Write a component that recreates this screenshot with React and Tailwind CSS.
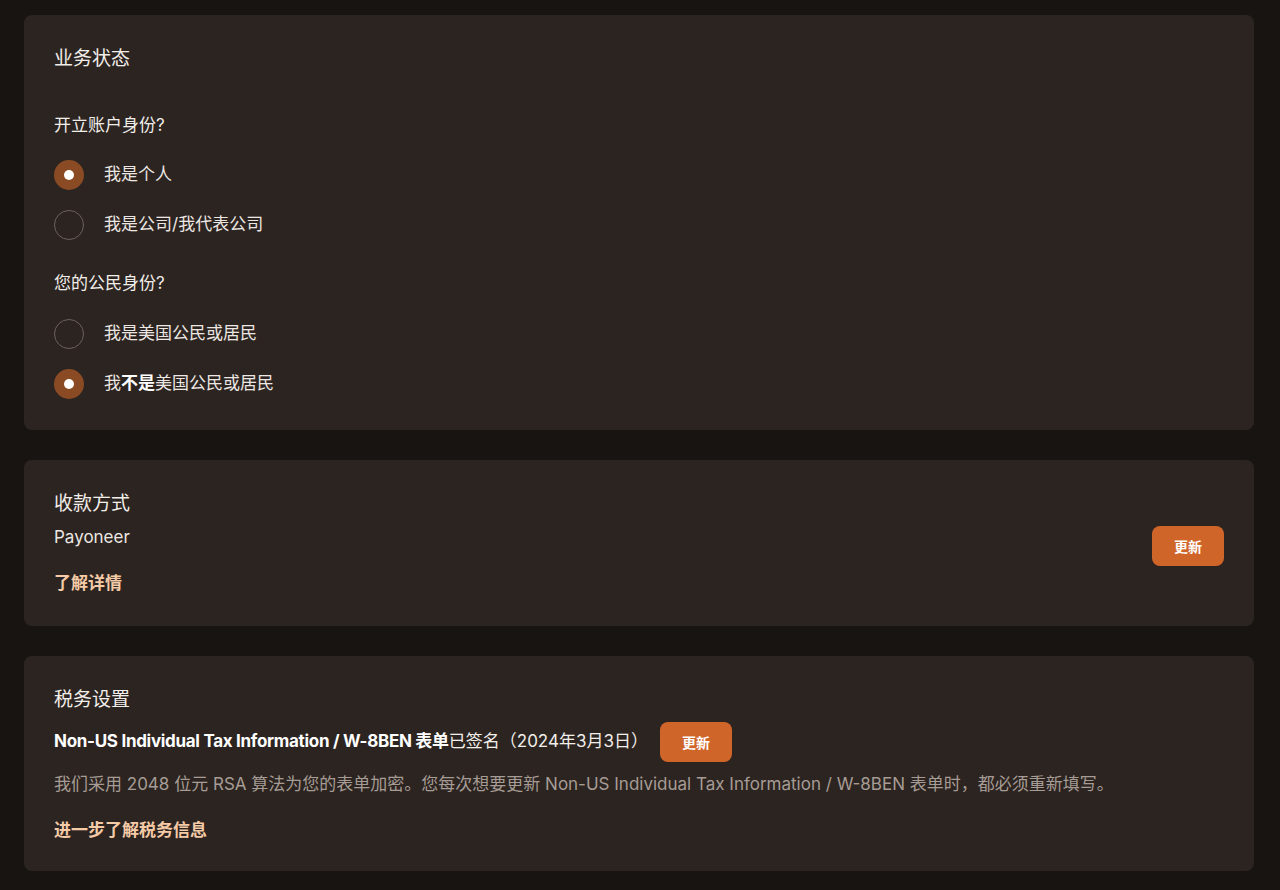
import React from 'react';

const FONT = { fontFamily: 'Inter, "Noto Sans CJK SC", sans-serif' };

function Radio({ checked, children }) {
  return (
    <label className="flex items-center gap-5 h-[40px]">
      {checked ? (
        <span className="w-[30px] h-[30px] rounded-full bg-[#8a4b24] flex items-center justify-center">
          <span className="w-[10px] h-[10px] rounded-full bg-white" />
        </span>
      ) : (
        <span className="w-[30px] h-[30px] rounded-full border border-[#6b625c]" />
      )}
      <span className="text-[17px] text-[#ece7e3]">{children}</span>
    </label>
  );
}

function UpdateButton() {
  return (
    <button className="h-[40px] w-[72px] shrink-0 rounded-lg bg-[#d0652a] text-white text-[14px] font-bold">
      更新
    </button>
  );
}

export default function App() {
  return (
    <div className="min-h-[890px] bg-[#181411] pl-6 pr-[26px] py-[15px] flex flex-col gap-[30px]" style={FONT}>
      {/* 业务状态 */}
      <div className="bg-[#2c2420] rounded-lg px-[30px] pt-[30px] pb-[26px]">
        <h2 className="text-[19px] text-[#f2eeea] leading-[28px]">业务状态</h2>
        <p className="mt-[38px] text-[17px] text-[#f2eeea] leading-[28px]">开立账户身份?</p>
        <div className="mt-[16px] flex flex-col gap-[10px]">
          <Radio checked>我是个人</Radio>
          <Radio>我是公司/我代表公司</Radio>
        </div>
        <p className="mt-[24px] text-[17px] text-[#f2eeea] leading-[28px]">您的公民身份?</p>
        <div className="mt-[17px] flex flex-col gap-[10px]">
          <Radio>我是美国公民或居民</Radio>
          <Radio checked>
            我<b className="font-bold text-white">不是</b>美国公民或居民
          </Radio>
        </div>
      </div>

      {/* 收款方式 */}
      <div className="bg-[#2c2420] rounded-lg px-[30px] pt-[30px] pb-[30px] flex items-center justify-between">
        <div>
          <h2 className="text-[19px] text-[#f2eeea] leading-[28px]">收款方式</h2>
          <p className="mt-[6px] text-[17px] text-[#ece7e3] leading-[26px]">Payoneer</p>
          <a className="block mt-[20px] text-[17px] font-bold text-[#f5cba7] leading-[26px]">了解详情</a>
        </div>
        <div className="pt-[6px]">
          <UpdateButton />
        </div>
      </div>

      {/* 税务设置 */}
      <div className="bg-[#2c2420] rounded-lg px-[30px] pt-[30px] pb-[28px]">
        <h2 className="text-[19px] text-[#f2eeea] leading-[28px]">税务设置</h2>
        <div className="mt-[8px] flex items-center gap-[12px]">
          <p className="text-[17px] text-[#f2eeea]">
            <b className="font-bold text-white tracking-[-0.3px]">Non-US Individual Tax Information / W-8BEN 表单</b>已签名（2024年3月3日）
          </p>
          <UpdateButton />
        </div>
        <p className="mt-[9px] text-[17px] text-[#a69c95] leading-[26px]">
          我们采用 2048 位元 RSA 算法为您的表单加密。您每次想要更新 Non-US Individual Tax Information / W-8BEN 表单时，都必须重新填写。
        </p>
        <a className="block mt-[20px] text-[17px] font-bold text-[#f5cba7] leading-[26px]">进一步了解税务信息</a>
      </div>
    </div>
  );
}
